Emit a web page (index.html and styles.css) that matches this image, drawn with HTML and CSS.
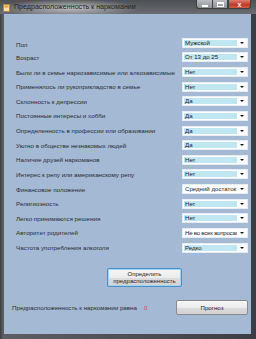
FILE: index.html
```html
<!DOCTYPE html>
<html lang="ru">
<head>
<meta charset="utf-8">
<title>Предрасположенность к наркомании</title>
<link rel="stylesheet" href="styles.css">
</head>
<body>
<div class="window">
  <div class="titlebar">
    <svg class="app-icon" width="7" height="8" viewBox="0 0 7 8">
      <rect x="0.5" y="0.5" width="6" height="7" fill="#f3e3a0" stroke="#b08a30"/>
      <rect x="1.5" y="1.5" width="4" height="2" fill="#e0a040"/>
    </svg>
    <span class="title">Предрасположенность к наркомании</span>
    <div class="caption-buttons">
      <div class="cbtn min"><span class="min-glyph"></span></div>
      <div class="cbtn max"><span class="max-glyph"></span></div>
      <div class="cbtn close"><span class="close-glyph">x</span></div>
    </div>
  </div>
  <div class="client">
    <div class="rows">
      <div class="row first"><span class="label">Пол</span><div class="combo"><span class="field">Мужской</span><span class="arrow"></span></div></div>
      <div class="row"><span class="label">Возраст</span><div class="combo"><span class="field">От 13 до 25</span><span class="arrow"></span></div></div>
      <div class="row"><span class="label">Были ли в семье наркозависимые или алкозависимые</span><div class="combo"><span class="field">Нет</span><span class="arrow"></span></div></div>
      <div class="row"><span class="label">Применялось ли рукоприкладство в семье</span><div class="combo"><span class="field">Нет</span><span class="arrow"></span></div></div>
      <div class="row"><span class="label">Склонность к депрессии</span><div class="combo"><span class="field">Да</span><span class="arrow"></span></div></div>
      <div class="row"><span class="label">Постоянные интересы и хобби</span><div class="combo"><span class="field">Да</span><span class="arrow"></span></div></div>
      <div class="row"><span class="label">Определенность в профессии или образовании</span><div class="combo"><span class="field">Да</span><span class="arrow"></span></div></div>
      <div class="row"><span class="label">Уютно в обществе незнакомых людей</span><div class="combo"><span class="field">Да</span><span class="arrow"></span></div></div>
      <div class="row"><span class="label">Наличие друзей наркоманов</span><div class="combo"><span class="field">Нет</span><span class="arrow"></span></div></div>
      <div class="row"><span class="label">Интерес к репу или американскому репу</span><div class="combo"><span class="field">Нет</span><span class="arrow"></span></div></div>
      <div class="row"><span class="label">Финансовое положение</span><div class="combo"><span class="field plain">Средний достаток</span><span class="arrow"></span></div></div>
      <div class="row"><span class="label">Религиозность</span><div class="combo"><span class="field">Нет</span><span class="arrow"></span></div></div>
      <div class="row"><span class="label">Легко принимаются решения</span><div class="combo"><span class="field">Нет</span><span class="arrow"></span></div></div>
      <div class="row"><span class="label">Авторитет родителей</span><div class="combo"><span class="field plain tight">Не во всех вопросах</span><span class="arrow"></span></div></div>
      <div class="row"><span class="label">Частота употребления алкоголя</span><div class="combo"><span class="field">Редко</span><span class="arrow"></span></div></div>
    </div>
    <div class="determine-wrap">
      <button class="btn determine">Определить<br>предрасположенность</button>
    </div>
    <div class="result-row">
      <span class="label">Предрасположенность к наркомании равна</span>
      <span class="value">0</span>
      <button class="btn forecast">Прогноз</button>
    </div>
  </div>
</div>
</body>
</html>
```
FILE: styles.css
```css
* { box-sizing: border-box; }
html, body { margin: 0; padding: 0; }
body {
  width: 256px;
  height: 339px;
  overflow: hidden;
  font-family: "Liberation Sans", Arial, sans-serif;
  background: #2e3136;
}
.window {
  width: 256px;
  height: 339px;
  display: flex;
  flex-direction: column;
  background: linear-gradient(to right, #3a3d42 0px, #5b5e63 3px, #4a4d52 60%, #3a3d42 100%);
}
.titlebar {
  height: 14px;
  display: flex;
  align-items: center;
  background:
    radial-gradient(ellipse 70px 9px at 70px 8px, rgba(210,210,210,0.85), rgba(210,210,210,0) 100%),
    linear-gradient(to bottom, #4c4f54, #5d6065 60%, #6a6d72);
}
.app-icon { margin-left: 3px; margin-top: 1px; }
.title {
  margin-left: 4px;
  font-size: 7.1px;
  color: #1e1e1e;
  white-space: nowrap;
}
.caption-buttons {
  margin-left: auto;
  align-self: flex-start;
  display: flex;
  margin-right: 5px;
}
.cbtn {
  height: 9px;
  display: flex;
  align-items: center;
  justify-content: center;
  border: 1px solid #3d3f42;
  border-top: none;
}
.cbtn.min, .cbtn.max {
  width: 16px;
  background: linear-gradient(to bottom, #b9bcc0, #8f9296);
}
.cbtn.min { border-radius: 0 0 0 3px; border-right: none; }
.cbtn.close {
  width: 23px;
  border-radius: 0 0 3px 0;
  background: linear-gradient(to bottom, #e07c6c, #c4362a 60%, #d45a44);
}
.min-glyph { width: 6px; height: 2px; background: #fff; margin-top: 3px; }
.max-glyph { width: 7px; height: 5px; border: 1px solid #fff; border-top-width: 2px; }
.close-glyph { color: #fff; font-size: 7px; font-weight: bold; line-height: 1; }
.client {
  flex: 1;
  margin: 0 5px 5px 4px;
  background: #a3b9d4;
  display: flex;
  flex-direction: column;
}
.rows {
  padding-top: 21.5px;
  display: flex;
  flex-direction: column;
}
.row {
  height: 14.64px;
  display: flex;
  align-items: center;
  padding-left: 12px;
  padding-right: 3px;
}
.row.first .label { margin-top: 3px; }
.label {
  font-size: 6.25px;
  color: #2a2d33;
  white-space: nowrap;
}
.combo {
  margin-left: auto;
  width: 66px;
  height: 10px;
  background: #ffffff;
  border: 1px solid #e6edf4;
  padding: 1px 0 1px 1px;
  display: flex;
  align-items: stretch;
}
.field {
  flex: 1;
  background: #bfe6f1;
  font-size: 6.1px;
  line-height: 6px;
  color: #1a1a1a;
  padding-left: 1px;
  white-space: nowrap;
  overflow: hidden;
}
.field.plain { background: #ffffff; }
.field.tight { letter-spacing: -0.25px; }
.arrow {
  width: 10px;
  position: relative;
}
.arrow::after {
  content: "";
  position: absolute;
  left: 3px;
  top: 2px;
  border-left: 2px solid transparent;
  border-right: 2px solid transparent;
  border-top: 2px solid #111;
}
.determine-wrap {
  padding-top: 13.5px;
  padding-left: 103px;
}
.btn {
  font-family: "Liberation Sans", Arial, sans-serif;
  color: #222;
  background: linear-gradient(to bottom, #f6f6f6 0%, #ececec 50%, #dddddd 51%, #d2d2d2 100%);
  border: 1px solid #8a8a8a;
  border-radius: 2px;
  padding: 0;
  cursor: default;
}
.determine {
  width: 75px;
  height: 19px;
  font-size: 6px;
  line-height: 7px;
  border-color: #4a90c8;
  box-shadow: inset 0 0 0 1px #9fd3f3;
}
.result-row {
  margin-top: 12.5px;
  display: flex;
  align-items: center;
  padding-left: 8px;
  padding-right: 3px;
  height: 15px;
}
.result-row .label { font-size: 6.2px; }
.value {
  margin-left: 7px;
  font-size: 6.2px;
  color: #e2484c;
}
.forecast {
  margin-left: auto;
  width: 72px;
  height: 15px;
  font-size: 6.1px;
}
```
